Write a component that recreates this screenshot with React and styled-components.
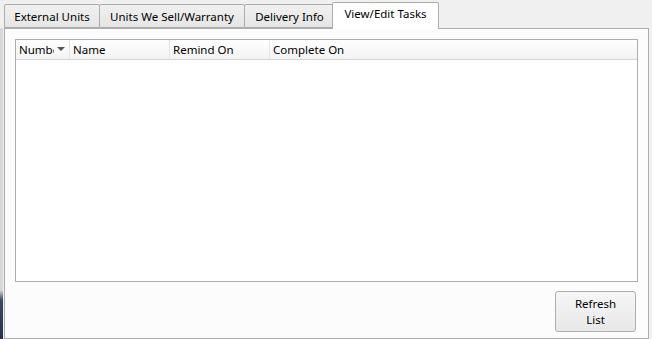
import React from 'react';
import styled, { createGlobalStyle } from 'styled-components';

const GlobalStyle = createGlobalStyle`
  html, body {
    margin: 0;
    padding: 0;
    background: #f0f0f0;
  }
  body {
    font-family: "Noto Sans", "Open Sans", sans-serif;
    font-size: 11.5px;
    color: #000;
  }
`;

const Window = styled.div`
  width: 652px;
  height: 339px;
  overflow: hidden;
  display: flex;
  background: #f0f0f0;
`;

const Edge = styled.div`
  width: 4px;
  flex: none;
  background: linear-gradient(to bottom, #f0f0f0 0, #f0f0f0 28px, #d9d9d9 28px, #d9d9d9 290px, #3a4a63 300px, #25324a 339px);
  border-right: 1px solid #f0f0f0;
  box-sizing: border-box;
`;

const Main = styled.div`
  flex: 1;
  display: flex;
  flex-direction: column;
  padding: 2px 3px 0 0;
`;

const TabStrip = styled.div`
  display: flex;
  align-items: flex-end;
  height: 26px;
  position: relative;
  z-index: 1;
`;

const Tab = styled.div`
  box-sizing: border-box;
  height: ${(p) => (p.$active ? '27px' : '24px')};
  margin-bottom: ${(p) => (p.$active ? '-1px' : '0')};
  padding: ${(p) => (p.$active ? '3px 0 0' : '4px 0 0')};
  margin-left: ${(p) => (p.$active ? '-2px' : '0')};
  margin-right: ${(p) => (p.$active ? '-2px' : '-1px')};
  border: 1px solid #acacac;
  border-bottom: ${(p) => (p.$active ? 'none' : '1px solid #acacac')};
  border-radius: 2px 2px 0 0;
  background: ${(p) => (p.$active ? '#ffffff' : 'linear-gradient(#f0f0f0, #e5e5e5)')};
  white-space: nowrap;
  line-height: 16px;
  width: ${(p) => p.$w}px;
  text-align: center;
`;

const Pane = styled.div`
  flex: 1;
  box-sizing: border-box;
  border: 1px solid #acacac;
  background: #fcfcfc;
  padding: 10px 10px 0 10px;
  display: flex;
  flex-direction: column;
`;

const ListView = styled.div`
  box-sizing: border-box;
  height: 243px;
  border: 1px solid #abadb3;
  background: #ffffff;
  display: flex;
  flex-direction: column;
`;

const HeaderRow = styled.div`
  display: flex;
  height: 19px;
  border-bottom: 1px solid #d5d5d5;
  background: linear-gradient(#ffffff, #f3f3f3);
`;

const HeaderCell = styled.div`
  box-sizing: border-box;
  width: ${(p) => p.$w}px;
  flex: ${(p) => (p.$fill ? '1' : 'none')};
  border-right: ${(p) => (p.$fill ? 'none' : '1px solid #e5e5e5')};
  padding-left: 3px;
  line-height: 19px;
  white-space: nowrap;
  overflow: hidden;
  position: relative;
`;

const SortArrow = styled.span`
  position: absolute;
  right: 4px;
  top: 7px;
  width: 0;
  height: 0;
  border-left: 4px solid transparent;
  border-right: 4px solid transparent;
  border-top: 4px solid #555;
`;

const CellText = styled.span`
  display: block;
  width: ${(p) => p.$clip || 'auto'};
  overflow: hidden;
`;

const ButtonRow = styled.div`
  display: flex;
  justify-content: flex-end;
  padding: 9px 2px 0 0;
`;

const Button = styled.button`
  box-sizing: border-box;
  width: 81px;
  height: 41px;
  border: 1px solid #adadad;
  border-radius: 3px;
  background: linear-gradient(#f6f6f6, #e8e8e8);
  font-family: inherit;
  font-size: 11.5px;
  line-height: 16px;
  color: #000;
  padding: 0;
`;

const tabs = [
  { label: 'External Units', w: 96 },
  { label: 'Units We Sell/Warranty', w: 146 },
  { label: 'Delivery Info', w: 91 },
  { label: 'View/Edit Tasks', w: 107, active: true },
];

const columns = [
  { label: 'Number', w: 54, sort: true },
  { label: 'Name', w: 100 },
  { label: 'Remind On', w: 100 },
  { label: 'Complete On', w: 100, fill: true },
];

export default function App() {
  return (
    <>
      <GlobalStyle />
      <Window>
        <Edge />
        <Main>
          <TabStrip>
            {tabs.map((t) => (
              <Tab key={t.label} $active={t.active} $w={t.w}>
                {t.label}
              </Tab>
            ))}
          </TabStrip>
          <Pane>
            <ListView>
              <HeaderRow>
                {columns.map((c) => (
                  <HeaderCell key={c.label} $w={c.w} $fill={c.fill}>
                    {c.sort ? (
                      <>
                        <CellText $clip="35px">{c.label}</CellText>
                        <SortArrow />
                      </>
                    ) : (
                      c.label
                    )}
                  </HeaderCell>
                ))}
              </HeaderRow>
            </ListView>
            <ButtonRow>
              <Button>
                Refresh
                <br />
                List
              </Button>
            </ButtonRow>
          </Pane>
        </Main>
      </Window>
    </>
  );
}
